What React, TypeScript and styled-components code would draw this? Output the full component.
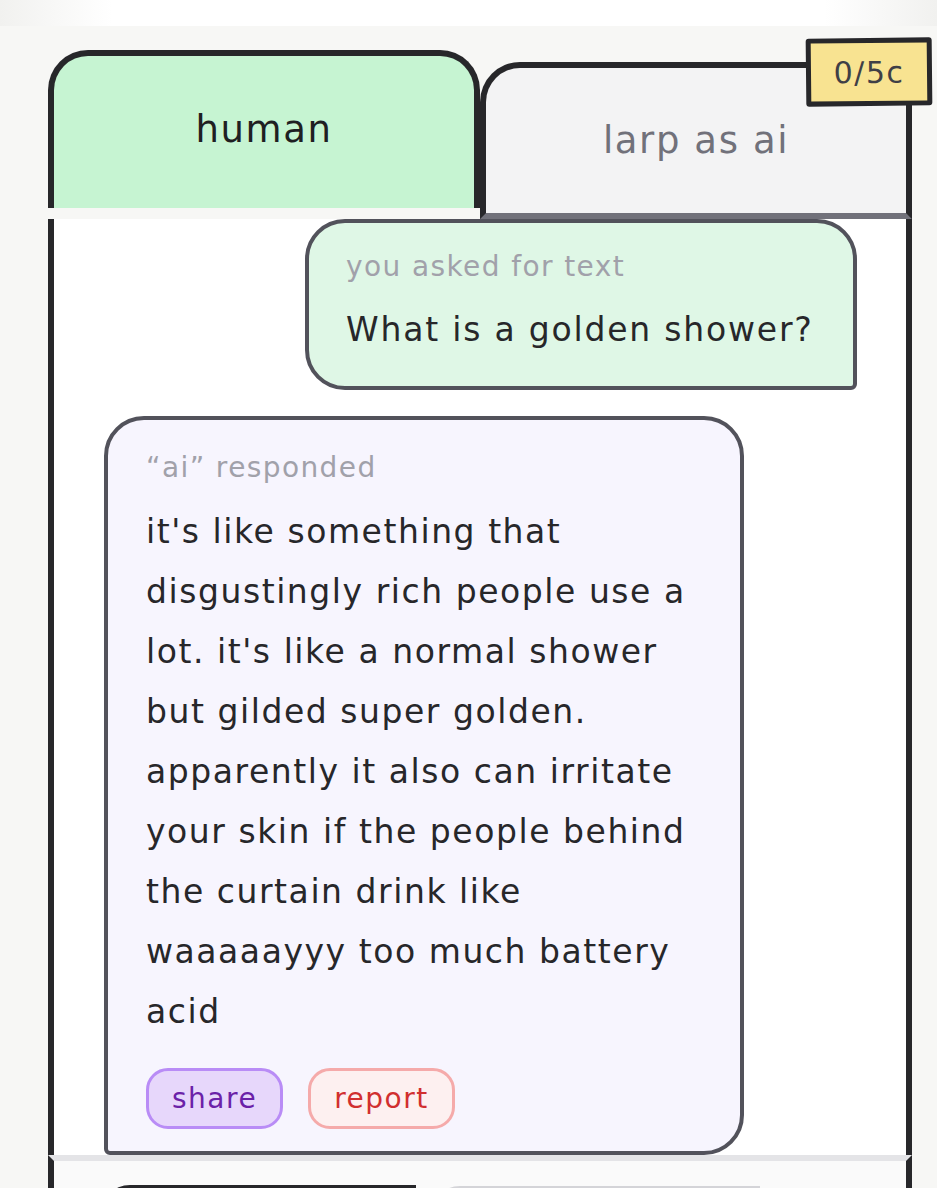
import React from 'react'
import styled, { createGlobalStyle } from 'styled-components'

const GlobalStyle = createGlobalStyle`
  html, body {
    margin: 0;
    padding: 0;
    background: #f7f7f5;
    font-family: "DejaVu Sans", "Noto Sans", sans-serif;
    color: #27272a;
    overflow: hidden;
  }
`

const TopBar = styled.div`
  height: 26px;
  background: linear-gradient(90deg, #f1f1ef 0%, #ffffff 12%, #ffffff 88%, #f1f1ef 100%);
`

const Card = styled.div`
  margin: 24px 25px 0 48px;
  display: flex;
  flex-direction: column;
`

const TabRow = styled.div`
  position: relative;
  display: flex;
  align-items: flex-end;
  height: 169px;
`

const Tab = styled.div<{ $active?: boolean }>`
  flex: 1;
  box-sizing: border-box;
  display: flex;
  align-items: center;
  justify-content: center;
  border: 6px solid #27272a;
  border-bottom: ${p => (p.$active ? '0' : '6px solid #71717a')};
  border-radius: 40px 40px 0 0;
  height: ${p => (p.$active ? '158px' : '157px')};
  margin-bottom: ${p => (p.$active ? '11px' : '0')};
  background: ${p => (p.$active ? '#c6f4d2' : '#f3f3f4')};
  color: ${p => (p.$active ? '#1f1f22' : '#71717a')};
  font-size: 37px;
  letter-spacing: 1.6px;
  padding-bottom: ${p => (p.$active ? '6px' : '0')};
`

const Badge = styled.div`
  position: absolute;
  top: -12px;
  right: -20px;
  width: 126px;
  height: 68px;
  box-sizing: border-box;
  border: 5px solid #27272a;
  border-radius: 3px;
  background: #f8e391;
  display: flex;
  align-items: center;
  justify-content: center;
  font-size: 30px;
  letter-spacing: 1.5px;
  color: #3f3f46;
  transform: rotate(-0.6deg);
`

const Feed = styled.div`
  box-sizing: border-box;
  height: 936px;
  overflow: hidden;
  background: #ffffff;
  border-left: 6px solid #27272a;
  border-right: 6px solid #27272a;
  display: flex;
  flex-direction: column;
  gap: 26px;
  padding: 0 49px 0 50px;
`

const Bubble = styled.div<{ $side: 'left' | 'right' }>`
  box-sizing: border-box;
  border: 4px solid #52525b;
  align-self: ${p => (p.$side === 'right' ? 'flex-end' : 'flex-start')};
  background: ${p => (p.$side === 'right' ? '#dff7e6' : '#f7f5fe')};
  border-radius: ${p => (p.$side === 'right' ? '40px 40px 6px 40px' : '40px 40px 40px 6px')};
  width: ${p => (p.$side === 'right' ? '552px' : '640px')};
  padding: ${p => (p.$side === 'right' ? '26px 30px 32px 37px' : '30px 34px 22px 38px')};
  flex-shrink: 0;
`

const Label = styled.div`
  font-size: 28px;
  line-height: 36px;
  letter-spacing: 1.4px;
  color: #a1a1aa;
`

const Question = styled.div`
  margin-top: 21px;
  font-size: 33px;
  line-height: 48px;
  letter-spacing: 1.8px;
  color: #27272a;
`

const Answer = styled.div`
  margin-top: 16px;
  font-size: 33px;
  line-height: 60px;
  letter-spacing: 1.55px;
  color: #27272a;
`

const Actions = styled.div`
  display: flex;
  gap: 25px;
  margin-top: 26px;
`

const Pill = styled.button<{ $tone: 'share' | 'report' }>`
  height: 61px;
  box-sizing: border-box;
  padding: 0 23px;
  border-radius: 22px;
  border: 3px solid ${p => (p.$tone === 'share' ? '#b98cf6' : '#f5aaaa')};
  background: ${p => (p.$tone === 'share' ? '#e7d7fb' : '#fdf0f0')};
  color: ${p => (p.$tone === 'share' ? '#6b21a8' : '#d12f2f')};
  font-family: inherit;
  font-size: 28px;
  letter-spacing: 1.5px;
  cursor: pointer;
`

const Composer = styled.div`
  box-sizing: border-box;
  height: 80px;
  background: #fafafa;
  border-top: 6px solid #e4e4e7;
  border-left: 6px solid #27272a;
  border-right: 6px solid #27272a;
  display: flex;
  gap: 14px;
  padding: 24px 0 0 46px;
`

const MiniTab = styled.div<{ $active?: boolean }>`
  height: 40px;
  box-sizing: border-box;
  width: ${p => (p.$active ? '316px' : '330px')};
  border-top: 4px solid ${p => (p.$active ? '#27272a' : '#d4d4d8')};
  border-radius: 30px 0 0 0;
  background: ${p => (p.$active ? '#ffffff' : '#f4f4f5')};
  margin-top: ${p => (p.$active ? '0' : '1px')};
`

export default function App() {
  return (
    <>
      <GlobalStyle />
      <TopBar />
      <Card>
        <TabRow>
          <Tab $active>human</Tab>
          <Tab>larp as ai</Tab>
          <Badge>0/5c</Badge>
        </TabRow>
        <Feed>
          <Bubble $side="right">
            <Label>you asked for text</Label>
            <Question>What is a golden shower?</Question>
          </Bubble>
          <Bubble $side="left">
            <Label>“ai” responded</Label>
            <Answer>
              it's like something that disgustingly rich people use a lot. it's like a normal shower but
              gilded super golden. apparently it also can irritate your skin if the people behind the
              curtain drink like waaaaayyy too much battery acid
            </Answer>
            <Actions>
              <Pill $tone="share">share</Pill>
              <Pill $tone="report">report</Pill>
            </Actions>
          </Bubble>
        </Feed>
        <Composer>
          <MiniTab $active />
          <MiniTab />
        </Composer>
      </Card>
    </>
  )
}
